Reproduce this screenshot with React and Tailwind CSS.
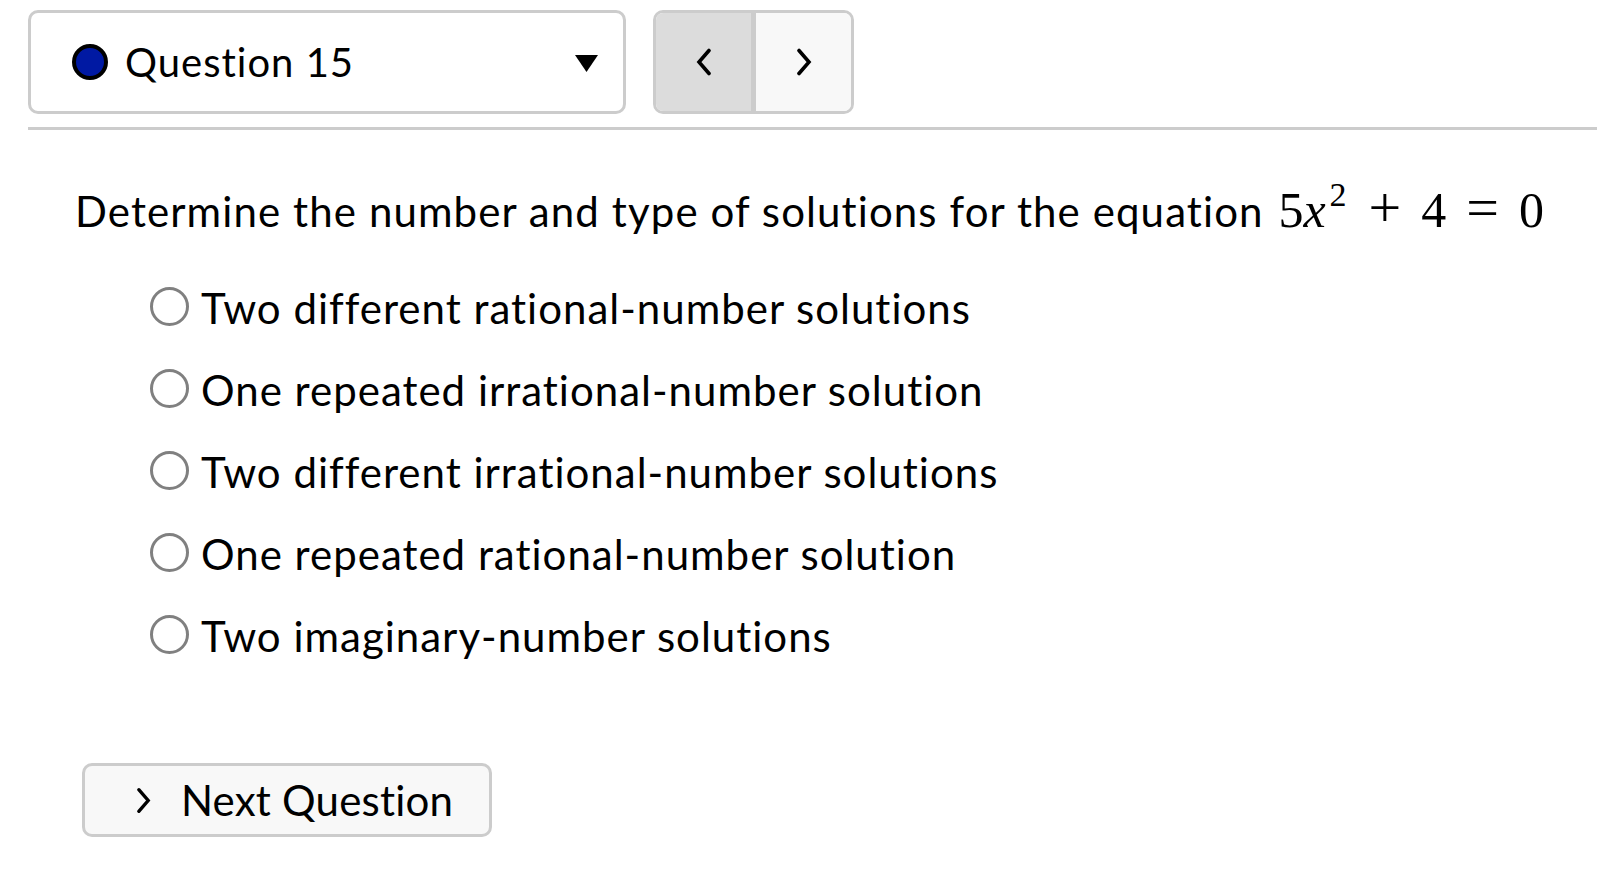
import { useState } from "react";

const options = [
  "Two different rational-number solutions",
  "One repeated irrational-number solution",
  "Two different irrational-number solutions",
  "One repeated rational-number solution",
  "Two imaginary-number solutions",
];

function Chevron({ dir = "right", className = "" }) {
  return (
    <svg viewBox="0 0 16 28" className={className} fill="none">
      <path
        d={dir === "right" ? "M3 2.5 L13 14 L3 25.5" : "M13 2.5 L3 14 L13 25.5"}
        stroke="#000"
        strokeWidth="3.6"
        strokeLinecap="round"
        strokeLinejoin="miter"
      />
    </svg>
  );
}

export default function App() {
  const [picked, setPicked] = useState(null);

  return (
    <div className="min-h-[894px] w-full bg-white text-black font-['Lato',sans-serif]">
      <div className="flex pt-[10px] pl-[28px]">
        <button className="flex h-[104px] w-[598px] items-center rounded-[10px] border-[3px] border-[#cccccc] bg-white pl-[41px] pr-[25px]">
          <span className="h-[36px] w-[36px] rounded-full border-[4px] border-black bg-[#0019a3]" />
          <span className="ml-[17px] text-[40px] leading-[50px] tracking-[1px]">Question 15</span>
          <svg viewBox="0 0 23 17" className="ml-auto mt-[3px] h-[17px] w-[23px]">
            <path d="M0 0 H23 L11.5 17 Z" fill="#000" />
          </svg>
        </button>

        <div className="ml-[27px] flex h-[104px] w-[201px] overflow-hidden rounded-[10px] border-[3px] border-[#cccccc]">
          <button className="flex w-[95px] items-center justify-center bg-[#dcdcdc]">
            <Chevron dir="left" className="h-[28px] w-[16px]" />
          </button>
          <div className="w-[5px] bg-[#cccccc]" />
          <button className="flex flex-1 items-center justify-center bg-[#f8f8f8]">
            <Chevron dir="right" className="h-[28px] w-[16px]" />
          </button>
        </div>
      </div>

      <div className="ml-[28px] mt-[13px] h-[3px] bg-[#cccccc]" />

      <p className="ml-[75px] mt-[53px] text-[42px] leading-[50px] whitespace-nowrap">
        <span className="tracking-[1.1px]">Determine the number and type of solutions for the equation</span>{" "}
        <span className="ml-[4px] font-['Liberation_Serif',serif] text-[50px]">
          5<i>x</i>
          <sup className="-top-[21px] ml-[4px] text-[34px]">2</sup>
          <span className="ml-[22px] mr-[20px] text-[58px]">+</span>4<span className="mx-[20px] text-[58px]">=</span>0
        </span>
      </p>

      <div className="ml-[150px] mt-[47px] flex flex-col">
        {options.map((o, i) => (
          <label key={o} className="flex h-[82px] cursor-pointer items-start" onClick={() => setPicked(i)}>
            <span className="mt-[4px] flex h-[39px] w-[39px] items-center justify-center rounded-full border-[3px] border-[#808080] bg-white">
              {picked === i && <span className="h-[21px] w-[21px] rounded-full bg-[#0019a3]" />}
            </span>
            <span className="ml-[12px] text-[42px] leading-[50px] tracking-[1px]">{o}</span>
          </label>
        ))}
      </div>

      <button className="ml-[82px] mt-[70px] flex h-[74px] w-[410px] items-center rounded-[10px] border-[3px] border-[#cccccc] bg-[#f8f8f8] pl-[51px]">
        <Chevron dir="right" className="h-[27px] w-[15px]" />
        <span className="ml-[30px] text-[42px] leading-[50px] tracking-[0.2px]">Next Question</span>
      </button>
    </div>
  );
}
